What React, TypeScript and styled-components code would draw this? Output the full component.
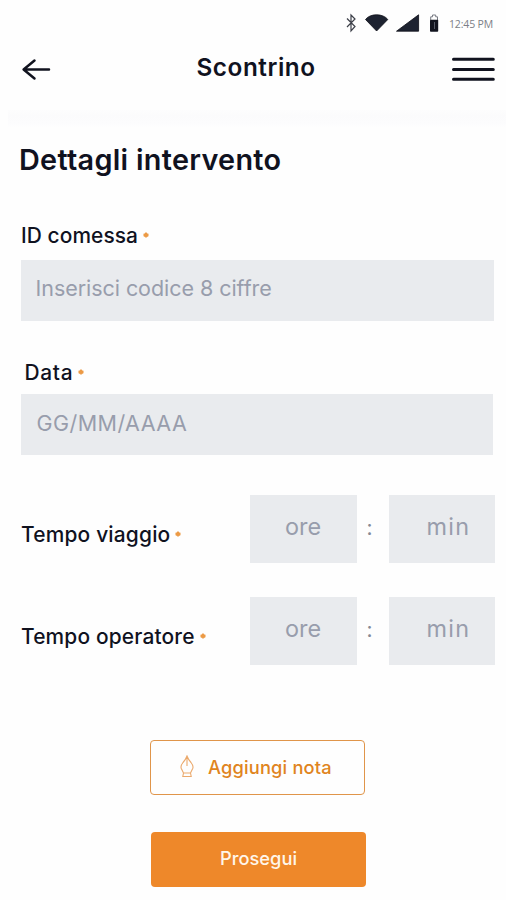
import React from "react";
import styled, { createGlobalStyle } from "styled-components";

const GlobalStyle = createGlobalStyle`
  *, *::before, *::after { box-sizing: border-box; }
  body { margin: 0; background: #fefefe; font-family: Inter, "Open Sans", sans-serif; color: #10121f; }
`;

const Screen = styled.main`
  width: 506px;
  height: 900px;
  overflow: hidden;
  background: #fefefe;
`;

const StatusBar = styled.div`
  display: flex;
  align-items: center;
  height: 46px;
  padding-left: 345px;
`;

const StatusIcons = styled.svg`
  flex: none;
  width: 104px;
  height: 46px;
`;

const Clock = styled.time`
  font: 400 10.5px/20px "Open Sans", sans-serif;
  letter-spacing: -0.15px;
  color: #7c7f87;
  padding-top: 2px;
  white-space: nowrap;
`;

const Header = styled.header`
  display: grid;
  grid-template-columns: 175px 1fr 54px;
  align-items: center;
  height: 64px;
  padding-bottom: 18px;
`;

const IconButton = styled.button`
  display: flex;
  padding: 0;
  border: 0;
  background: none;
  color: #11131f;
`;

const BackButton = styled(IconButton)`
  padding-left: 21px;
`;

const ScreenTitle = styled.h1`
  margin: 0;
  padding: 0 0 4px 21.5px;
  font-size: 24.3px;
  font-weight: 600;
  line-height: 28px;
  letter-spacing: 0.55px;
  white-space: nowrap;
`;

const HeaderShade = styled.div`
  height: 17px;
  margin-left: 8px;
  background: linear-gradient(#fdfdfd, #fbfbfc 30%, #fcfcfd 80%, #fefefe);
`;

const Form = styled.form`
  display: flex;
  flex-direction: column;
  padding: 17px 11px 0 21px;
`;

const SectionTitle = styled.h2`
  margin: 0 0 46px -2px;
  font-size: 28.8px;
  font-weight: 600;
  line-height: 32px;
  letter-spacing: 0.3px;
  white-space: nowrap;
`;

const Label = styled.label<{ $track: number; $indent?: number }>`
  display: flex;
  align-items: center;
  gap: 5px;
  height: 28px;
  padding-left: ${(p) => p.$indent ?? 0}px;
  padding-bottom: 1px;
  font-size: 20.9px;
  font-weight: 500;
  letter-spacing: ${(p) => p.$track}px;
  white-space: nowrap;
`;

const Field = styled.div<{ $gap: number; $after: number }>`
  display: flex;
  flex-direction: column;
  gap: ${(p) => p.$gap}px;
  margin-bottom: ${(p) => p.$after}px;
`;

const TextBox = styled.div<{ $track: number; $top: number; $left: number; $width: number }>`
  width: ${(p) => p.$width}px;
  height: 61px;
  padding: ${(p) => p.$top}px 0 0 ${(p) => p.$left}px;
  background: #e9ebee;
  color: #989dac;
  font-size: 21.5px;
  line-height: 28px;
  letter-spacing: ${(p) => p.$track}px;
  white-space: nowrap;
`;

const TimeRow = styled.div`
  display: grid;
  grid-template-columns: 229px 107px 31.5px 106.5px;
  height: 68px;
  margin-bottom: 34px;

  ${Label} { margin-top: 26.5px; }
`;

const TimeBox = styled.div<{ $left: number; $track: number }>`
  padding: 18.5px 0 0 ${(p) => p.$left}px;
  background: #e9ebee;
  color: #989dac;
  font-size: 23.4px;
  line-height: 28px;
  letter-spacing: ${(p) => p.$track}px;
`;

const Colon = styled.span`
  padding: 19px 0 0 9.5px;
  color: #858996;
  font-size: 21px;
  line-height: 28px;
`;

const Actions = styled.div`
  display: flex;
  flex-direction: column;
  gap: 37px;
  padding: 41.5px 0 0 129px;
`;

const Button = styled.button<{ $track: number }>`
  display: flex;
  align-items: center;
  width: 215px;
  height: 55px;
  padding: 0 0 2px;
  border: 0;
  border-radius: 4px;
  font: 500 18.3px/24px Inter, sans-serif;
  letter-spacing: ${(p) => p.$track}px;
  white-space: nowrap;
`;

const NoteButton = styled(Button)`
  border: 1.5px solid #e0954a;
  background: #fefefe;
  color: #e08420;
  padding-left: 29px;
  gap: 14px;
`;

const ProceedButton = styled(Button)`
  height: 54.5px;
  margin-left: 1px;
  padding-left: 69px;
  background: #ee882a;
  color: #fff6ea;
`;

const Star = styled.svg`
  width: 6px;
  height: 6px;
  flex: none;
  margin-bottom: 2px;
`;

const Required = () => (
  <Star viewBox="0 0 6 6" fill="none" stroke="#ec9a45" strokeWidth="1.7">
    <path d="M3 .4v5.200M.6 2.100l4.800 1.800M5.400 2.100L.6 3.900" />
  </Star>
);

const StatusGlyphs = () => (
  <StatusIcons viewBox="345 0 104 46">
    <path d="M347 18.500l8 8-4 4.500V15l4 4-8 8" fill="none" stroke="#3c3f48" strokeWidth="1.200" />
    <path d="M365.500 19.500C370 13.200 383 13.200 387.800 19.500L376.600 31Z" fill="#1d2230" stroke="#0c0e16" strokeWidth=".8" strokeLinejoin="round" />
    <path d="M396.500 31.200L418.600 14.800V31.200Z" fill="#1d2230" stroke="#0c0e16" strokeWidth=".8" />
    <path d="M430.700 20v-3.200h1.800V15h3.200v1.800h1.800V20" fill="none" stroke="#777a82" strokeWidth="1" />
    <rect x="430" y="19.800" width="8.200" height="12" rx=".8" fill="#12141f" />
    <path d="M434.500 22v7" stroke="#555966" strokeWidth="1" />
  </StatusIcons>
);

const PenNib = () => (
  <svg width="14" height="23" viewBox="0 0 14 23" fill="none" stroke="#eba96c" strokeWidth="1.100">
    <path d="M7 1Q5.500 5 3 7.500Q.2 11 1.300 13.500L3.500 18h7l2.200-4.500Q13.800 11 11 7.500Q8.500 5 7 1ZM7 2v9M3.500 18l-.7 3.500h8.400L10.500 18" />
  </svg>
);

export default function App() {
  return (
    <Screen>
      <GlobalStyle />
      <StatusBar>
        <StatusGlyphs />
        <Clock>12:45 PM</Clock>
      </StatusBar>
      <Header>
        <BackButton aria-label="Indietro">
          <svg width="30" height="24" viewBox="0 0 30 24" fill="none" stroke="currentColor" strokeWidth="2.500" strokeLinecap="round" strokeLinejoin="round">
            <path d="M28 12.500H3M13.500 3.500L2.600 12.500L13.500 21.500" />
          </svg>
        </BackButton>
        <ScreenTitle>Scontrino</ScreenTitle>
        <IconButton aria-label="Menu">
          <svg width="44" height="28" viewBox="0 0 44 28" fill="none" stroke="currentColor" strokeWidth="3" strokeLinecap="round">
            <path d="M1.500 4.300H41.300M1.500 14.500H41.300M1.500 24.300H41.300" />
          </svg>
        </IconButton>
      </Header>
      <HeaderShade />
      <Form>
        <SectionTitle>Dettagli intervento</SectionTitle>
        <Field $gap={10} $after={38}>
          <Label $track={0.08}>ID comessa<Required /></Label>
          <TextBox $track={-0.05} $top={14} $left={14.5} $width={473}>Inserisci codice 8 ciffre</TextBox>
        </Field>
        <Field $gap={7} $after={39.5}>
          <Label $track={0.7} $indent={3.5}>Data<Required /></Label>
          <TextBox $track={0.45} $top={15} $left={15.5} $width={472}>GG/MM/AAAA</TextBox>
        </Field>
        <TimeRow>
          <Label $track={0.2}>Tempo viaggio<Required /></Label>
          <TimeBox $left={35} $track={0}>ore</TimeBox>
          <Colon>:</Colon>
          <TimeBox $left={38} $track={1.3}>min</TimeBox>
        </TimeRow>
        <TimeRow>
          <Label $track={0.17}>Tempo operatore<Required /></Label>
          <TimeBox $left={35} $track={0}>ore</TimeBox>
          <Colon>:</Colon>
          <TimeBox $left={38} $track={1.3}>min</TimeBox>
        </TimeRow>
        <Actions>
          <NoteButton $track={0.17} type="button">
            <PenNib />
            Aggiungi nota
          </NoteButton>
          <ProceedButton $track={0} type="button">Prosegui</ProceedButton>
        </Actions>
      </Form>
    </Screen>
  );
}
